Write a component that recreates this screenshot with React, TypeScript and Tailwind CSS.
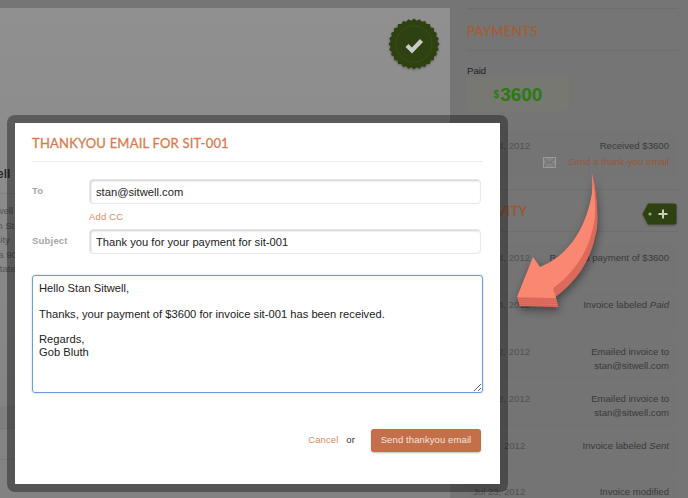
const badgePoints = (() => {
  const pts: string[] = [];
  const teeth = 28;
  for (let i = 0; i < teeth * 2; i++) {
    const r = i % 2 === 0 ? 25.5 : 23.5;
    const a = (i / (teeth * 2)) * Math.PI * 2;
    pts.push(`${(26 + r * Math.cos(a)).toFixed(2)},${(26 + r * Math.sin(a)).toFixed(2)}`);
  }
  return pts.join(" ");
})();

const arrowPath =
  "M81 8 C85 30 87 55 83 67 C78 92 64 113 43 128 L46 138 L7 137 L23 97 L30 107 C53 98 75 75 82 33 C83 22 82 14 81 8 Z";

const rows = [
  { date: "Aug 14, 2012", lines: ["Received payment of $3600"] },
  { date: "Aug 14, 2012", lines: ["Invoice labeled ", "Paid"], em: true },
  { date: "Aug 02, 2012", lines: ["Emailed invoice to", "stan@sitwell.com"] },
  { date: "Aug 02, 2012", lines: ["Emailed invoice to", "stan@sitwell.com"] },
  { date: "Jul 30, 2012", lines: ["Invoice labeled ", "Sent"], em: true },
  { date: "Jul 23, 2012", lines: ["Invoice modified"] },
];

function Row({ date, lines, em }: { date: string; lines: string[]; em?: boolean }) {
  return (
    <div className="flex h-[43px] w-[210px] shrink-0 justify-between rounded-[3px] bg-[#747474] pl-[6px] pr-2 pt-[7px] text-[9.6px] leading-[14px]">
      <span className="whitespace-nowrap text-[#515151]">{date}</span>
      <div className="whitespace-nowrap text-right text-[#3a3a3a]">
        {em ? (
          <div>
            {lines[0]}
            <em>{lines[1]}</em>
          </div>
        ) : (
          lines.map((l) => <div key={l}>{l}</div>)
        )}
      </div>
    </div>
  );
}

export default function App() {
  return (
    <div className="relative flex h-[498px] w-[688px] items-start overflow-hidden bg-[#757575] font-['Liberation_Sans',Arial,sans-serif]">
      <main className="mt-2 flex h-[490px] w-[450px] shrink-0 flex-col bg-gradient-to-b from-[#909090] to-[#828282]">
        <div className="flex justify-end pr-[10px] pt-[10px]">
          <svg width="52" height="52" viewBox="0 0 52 52" className="drop-shadow-[0_1px_1px_rgba(0,0,0,0.3)]">
            <polygon points={badgePoints} fill="#2e4111" />
            <circle cx="26" cy="26" r="18" fill="none" stroke="#4c6032" strokeWidth="0.6" strokeDasharray="1.5 1" />
            <path d="M19 27.5 L24 32.5 L33.5 22.5" fill="none" stroke="#c9c9c9" strokeWidth="4.2" />
          </svg>
        </div>
        <div className="-ml-[57px] mt-[95px] text-[12px] font-bold leading-[18px] text-[#2b2b2b]">Stan Sitwell</div>
        <div className="mt-[10px] h-px w-[450px] bg-[#818181]" />
        <div className="-ml-[37px] mt-[10px] text-[9.6px] leading-[14.5px] text-[#555]">
          <div>Stan Sitwell</div>
          <div>Attn Stan St</div>
          <div>Sitwell City</div>
          <div>California 90</div>
          <div>United States</div>
        </div>
        <div className="mt-[129px] h-[23px] border-b border-[#777] bg-[#7f7f7f]" />
        <div className="mt-[30px] h-px bg-[#7c7c7c]" />
      </main>

      <aside className="ml-[17px] flex w-[211px] shrink-0 flex-col pt-2">
        <div className="h-px bg-[#6e6e6e]" />
        <h2 className="h-[41px] pt-[3px] font-['Lato',sans-serif] text-[13px] font-normal leading-[38px] tracking-[0.45px] text-[#a55c35] [-webkit-text-stroke:0.3px_currentColor]">
          PAYMENTS
        </h2>
        <div className="h-px bg-[#6e6e6e]" />
        <div className="mt-[13px] text-[9.6px] leading-[13px] text-[#222]">Paid</div>
        <div className="flex h-[34px] w-[102px] items-center justify-center rounded-[3px] bg-[#787872] font-bold text-[#2a7a14]">
          <span className="mr-px text-[10px]">$</span>
          <span className="text-[19px] leading-none">3600</span>
        </div>
        <div className="mt-[21px] flex h-[46px] w-[210px] flex-col rounded-[3px] bg-[#747474] pl-[6px] pr-2 pt-[7px] text-[9.6px] leading-[14px]">
          <div className="flex justify-between">
            <span className="text-[#515151]">Aug 14, 2012</span>
            <span className="text-[#3a3a3a]">Received $3600</span>
          </div>
          <div className="mt-[2px] flex items-center justify-end gap-[12px] text-[#96573a]">
            <svg width="13" height="11" viewBox="0 0 13 11" fill="none">
              <rect x="0.5" y="0.5" width="12" height="10" fill="#858585" stroke="#9b9b9b" />
              <path d="M1 1 L6.5 6 L12 1 M1 10 L5 5 M12 10 L8 5" stroke="#6e6e6e" />
            </svg>
            <span>Send a thank-you email</span>
          </div>
        </div>
        <div className="mt-[11px] h-px bg-[#6e6e6e]" />
        <div className="flex h-[41px] items-center justify-between pt-[6px]">
          <h2 className="-mt-[3px] font-['Lato',sans-serif] text-[13px] font-normal tracking-[0.45px] text-[#9e5330] [-webkit-text-stroke:0.3px_currentColor]">
            ACTIVITY
          </h2>
          <svg width="35" height="22" viewBox="0 0 35 22" className="mr-px drop-shadow-[0_1px_1px_rgba(0,0,0,0.3)]">
            <path d="M6 0.5 H32.5 Q34.5 0.5 34.5 2.5 V19.5 Q34.5 21.5 32.5 21.5 H6 L0.5 11 Z" fill="#2e4111" />
            <circle cx="8" cy="11" r="1.6" fill="#9aa58a" />
            <path d="M21 6.5 V15.5 M16.5 11 H25.5" stroke="#c9cdc2" strokeWidth="2" />
          </svg>
        </div>
        <div className="h-px bg-[#6e6e6e]" />
        <div className="mt-[12px] flex flex-col gap-[3.9px]">
          {rows.map((r, i) => (
            <Row key={i} {...r} />
          ))}
        </div>
      </aside>

      <div className="absolute left-[7px] top-[115px] h-[377px] w-[501px] rounded-[8px] border-8 border-black/35 bg-white bg-clip-padding">
        <div className="flex h-full flex-col pl-[17px] pr-[17px] text-[#333]">
          <h1 className="pt-[11px] font-['Lato',sans-serif] text-[13px] font-normal leading-[18px] tracking-[0.2px] text-[#dd7a4c] [-webkit-text-stroke:0.3px_currentColor]">
            THANKYOU EMAIL FOR SIT-001
          </h1>
          <div className="mt-[9px] h-px w-[451px] bg-[#ececec]" />
          <div className="mt-[17px] flex items-center pr-[2px]">
            <label className="w-[57px] shrink-0 text-[9.5px] font-bold tracking-[0.2px] text-[#a6a6a6]">To</label>
            <input
              defaultValue="stan@sitwell.com"
              className="h-[25px] w-[392px] rounded-[4px] border border-[#e8e8e8] px-[6px] text-[11.2px] text-[#222] shadow-[inset_1px_1px_2px_rgba(0,0,0,0.2)] outline-none"
            />
          </div>
          <a className="ml-[57px] mt-[7px] text-[9.5px] leading-[12px] tracking-[0.15px] text-[#e08a5e]">Add CC</a>
          <div className="mt-[6px] flex items-center">
            <label className="w-[57px] shrink-0 text-[9.5px] font-bold tracking-[0.2px] text-[#a6a6a6]">Subject</label>
            <input
              defaultValue="Thank you for your payment for sit-001"
              className="h-[25px] w-[392px] rounded-[4px] border border-[#e8e8e8] px-[6px] text-[11.2px] text-[#222] shadow-[inset_1px_1px_2px_rgba(0,0,0,0.2)] outline-none"
            />
          </div>
          <textarea
            defaultValue={
              "Hello Stan Sitwell,\n\nThanks, your payment of $3600 for invoice sit-001 has been received.\n\nRegards,\nGob Bluth"
            }
            className="mt-[21px] h-[118px] w-[451px] rounded-[3px] border border-[#6a9fdc] px-[6px] py-[6px] text-[11.2px] leading-[12.8px] text-[#222] shadow-[0_0_2px_rgba(90,150,220,0.5)] outline-none"
          />
          <div className="mt-[36px] flex items-center justify-end pr-[2px] text-[9.5px] tracking-[0.1px]">
            <a className="text-[#e08a5e]">Cancel</a>
            <span className="ml-[8px] text-[#333]">or</span>
            <button className="ml-[16px] h-[23px] w-[110px] rounded-[3px] bg-[#c3704a] text-[#f3e3da] shadow-[0_1px_2px_rgba(0,0,0,0.25)]">
              Send thankyou email
            </button>
          </div>
        </div>
      </div>

      <svg
        width="110"
        height="160"
        viewBox="0 0 110 160"
        className="pointer-events-none absolute left-[510px] top-[160px] drop-shadow-[1px_4px_4px_rgba(0,0,0,0.4)]"
      >
        {[9, 8, 7, 6, 5, 4, 3, 2, 1].map((n) => (
          <path
            key={n}
            d={arrowPath}
            fill={n % 2 === 0 ? "#d0655a" : "#e8705f"}
            transform={`translate(${(n * 0.25).toFixed(2)} ${n})`}
          />
        ))}
        <path d={arrowPath} fill="#f98771" />
      </svg>
    </div>
  );
}
